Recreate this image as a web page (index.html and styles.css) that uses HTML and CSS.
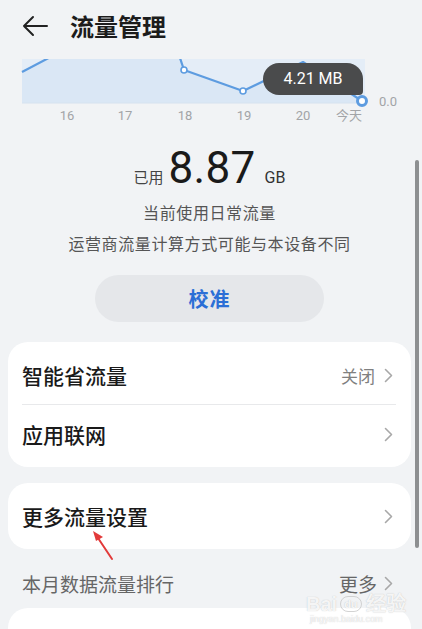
FILE: index.html
```html
<!DOCTYPE html>
<html lang="zh-CN">
<head>
<meta charset="utf-8">
<title>流量管理</title>
<link rel="stylesheet" href="styles.css">
</head>
<body>
<div class="page">
  <header class="header">
    <svg class="back" width="26" height="22" viewBox="0 0 26 22"><path d="M11 2 L2 11 L11 20 M2 11 H25" fill="none" stroke="#222" stroke-width="2" stroke-linecap="round" stroke-linejoin="round"/></svg>
    <h1 class="title">流量管理</h1>
  </header>

  <div class="chart">
    <svg class="chart-svg" width="422" height="68" viewBox="0 0 422 68">
      <rect x="22" y="0" width="343" height="44" fill="#e4edf7"/>
      <path d="M22 13 L48 0 L180 0 L184 11 L243 32 L303 3 L362 42 L362 44 L22 44 Z" fill="#dae7f5"/>
      <line x1="22" y1="44" x2="365" y2="44" stroke="#d6e2ef" stroke-width="1"/>
      <path d="M22 13 L60 -7 L170 -7 L180 -1 L184 11 L243 32 L303 3 L362 42" fill="none" stroke="#5d9ce0" stroke-width="2.2" stroke-linejoin="round"/>
      <circle cx="184" cy="11" r="3" fill="#fff" stroke="#5d9ce0" stroke-width="1.6"/>
      <circle cx="243" cy="32" r="3" fill="#fff" stroke="#5d9ce0" stroke-width="1.6"/>
      <circle cx="362" cy="42" r="4.5" fill="#fff" stroke="#5d9ce0" stroke-width="3"/>
      <text class="axis" x="388" y="47">0.0</text>
      <text class="axis" x="67" y="61">16</text>
      <text class="axis" x="125" y="61">17</text>
      <text class="axis" x="185" y="61">18</text>
      <text class="axis" x="244" y="61">19</text>
      <text class="axis" x="303" y="61">20</text>
      <text class="axis" x="349" y="61">今天</text>
    </svg>
    <div class="tooltip">4.21 MB</div>
  </div>

  <section class="usage">
    <div class="usage-row">
      <span class="usage-label">已用</span>
      <span class="usage-num">8.87</span>
      <span class="usage-unit">GB</span>
    </div>
    <p class="usage-desc">当前使用日常流量</p>
    <p class="usage-note">运营商流量计算方式可能与本设备不同</p>
    <div class="btn">校准</div>
  </section>

  <div class="cards">
    <div class="card">
      <div class="row">
        <span class="row-title">智能省流量</span>
        <span class="row-value">关闭</span>
        <svg class="chev" width="9" height="15" viewBox="0 0 9 15"><path d="M1.5 1.5 L7.5 7.5 L1.5 13.5" fill="none" stroke="#a8a8a8" stroke-width="1.6" stroke-linecap="round" stroke-linejoin="round"/></svg>
      </div>
      <div class="divider"></div>
      <div class="row">
        <span class="row-title">应用联网</span>
        <svg class="chev" width="9" height="15" viewBox="0 0 9 15"><path d="M1.5 1.5 L7.5 7.5 L1.5 13.5" fill="none" stroke="#a8a8a8" stroke-width="1.6" stroke-linecap="round" stroke-linejoin="round"/></svg>
      </div>
    </div>

    <div class="card">
      <div class="row">
        <span class="row-title">更多流量设置</span>
        <svg class="chev" width="9" height="15" viewBox="0 0 9 15"><path d="M1.5 1.5 L7.5 7.5 L1.5 13.5" fill="none" stroke="#a8a8a8" stroke-width="1.6" stroke-linecap="round" stroke-linejoin="round"/></svg>
      </div>
    </div>

    <div class="section-head">
      <span class="section-title">本月数据流量排行</span>
      <span class="section-more">更多</span>
      <svg class="chev" width="9" height="15" viewBox="0 0 9 15"><path d="M1.5 1.5 L7.5 7.5 L1.5 13.5" fill="none" stroke="#a8a8a8" stroke-width="1.6" stroke-linecap="round" stroke-linejoin="round"/></svg>
    </div>

    <div class="card card-tall"></div>
  </div>

  <svg class="annot" width="30" height="34" viewBox="0 0 30 34"><path d="M22 30 L8 9" stroke="#e23a3a" stroke-width="2" stroke-linecap="round"/><path d="M3 2 L13 8 L6 12 Z" fill="#e23a3a"/></svg>

  <div class="scrollbar"></div>

  <div class="watermark">
    <div class="wm-main">Bai<span class="wm-du">du</span>经验</div>
    <div class="wm-sub">jingyan.baidu.com</div>
  </div>
</div>
</body>
</html>
```
FILE: styles.css
```css
* { box-sizing: border-box; }
html, body { margin: 0; padding: 0; }
body {
  background: #f1f3f5;
  font-family: "Noto Sans CJK SC", "Noto Sans", Roboto, sans-serif;
  color: #1a1a1a;
  width: 422px;
  height: 629px;
  overflow: hidden;
}
.page { position: relative; width: 422px; height: 629px; overflow: hidden; }

.header {
  height: 52px;
  display: flex;
  align-items: center;
  padding-left: 22px;
  gap: 22px;
}
.back { display: block; }
.title {
  margin: 0;
  font-size: 24px;
  font-weight: 700;
  color: #1c1c1c;
  line-height: 1;
}

.chart { position: relative; margin-top: 7px; height: 68px; }
.chart-svg { display: block; }
.axis {
  font-family: Roboto, "Noto Sans CJK SC", sans-serif;
  font-size: 13px;
  fill: #a2a4a7;
  text-anchor: middle;
}
.tooltip {
  position: absolute;
  left: 263px;
  top: 4px;
  width: 100px;
  height: 32px;
  background: #4a4b4c;
  color: #fff;
  border-radius: 16px 16px 4px 16px;
  font-family: Roboto, sans-serif;
  font-size: 16px;
  line-height: 32px;
  text-align: center;
}

.usage {
  display: flex;
  flex-direction: column;
  align-items: center;
  padding: 0 11px 0 8px;
}
.usage-row {
  margin-top: 18px;
  height: 46px;
  line-height: 46px;
  display: flex;
  align-items: baseline;
  justify-content: center;
}
.usage-label { font-size: 15px; color: #444; margin-right: 5px; }
.usage-num {
  font-family: Roboto, sans-serif;
  font-size: 44px;
  color: #1a1a1a;
  letter-spacing: 0.3px;
}
.usage-unit {
  font-family: Roboto, sans-serif;
  font-size: 16px;
  color: #333;
  margin-left: 9px;
}
.usage-desc, .usage-note {
  margin: 0;
  font-size: 16px;
  line-height: 24px;
  color: #555;
  letter-spacing: 0.6px;
}
.usage-desc { margin-top: 9px; }
.usage-note { margin-top: 7px; }
.btn {
  margin-top: 20px;
  width: 229px;
  height: 47px;
  border-radius: 24px;
  background: #e5e7ea;
  color: #2b6fd6;
  font-size: 20px;
  font-weight: 700;
  line-height: 47px;
  text-align: center;
  letter-spacing: 1px;
}

.cards {
  margin-top: 20px;
  padding: 0 11px 0 8px;
  display: flex;
  flex-direction: column;
}
.card {
  background: #fff;
  border-radius: 20px;
  padding: 4px 0;
}
.card + .card { margin-top: 16px; }
.row {
  height: 58px;
  display: flex;
  align-items: center;
  padding: 0 18px 0 14px;
}
.row-title {
  flex: 1;
  font-size: 21px;
  font-weight: 500;
  color: #1a1a1a;
}
.row-value {
  font-size: 17px;
  color: #808080;
  margin-right: 9px;
}
.chev { display: block; }
.divider {
  height: 1px;
  background: #e8e9eb;
  margin: 0 15px 0 14px;
}

.section-head {
  margin-top: 14px;
  height: 45px;
  display: flex;
  align-items: center;
  padding: 0 18px 4px 14px;
}
.section-title {
  flex: 1;
  font-size: 19px;
  line-height: 22px;
  color: #666;
}
.section-more {
  font-size: 19px;
  line-height: 22px;
  color: #666;
  margin-right: 7px;
}
.card-tall { height: 80px; }

.annot {
  position: absolute;
  left: 90px;
  top: 529px;
}
.scrollbar {
  position: absolute;
  left: 415px;
  top: 160px;
  width: 4px;
  height: 388px;
  border-radius: 2px;
  background: #8d8f91;
}
.watermark {
  position: absolute;
  left: 306px;
  top: 594px;
  color: rgba(255,255,255,0.85);
  text-shadow: 0 0 1px rgba(150,150,150,0.6);
  font-family: "Liberation Sans", sans-serif;
}
.wm-main { font-size: 20px; font-weight: 700; line-height: 20px; display: flex; align-items: center; }
.wm-du {
  font-size: 11px;
  border: 1px solid rgba(200,200,200,0.8);
  border-radius: 8px;
  padding: 0 3px;
  margin: 0 4px 0 3px;
  line-height: 14px;
}
.wm-sub { font-size: 9px; line-height: 11px; margin-left: 4px; }
```
